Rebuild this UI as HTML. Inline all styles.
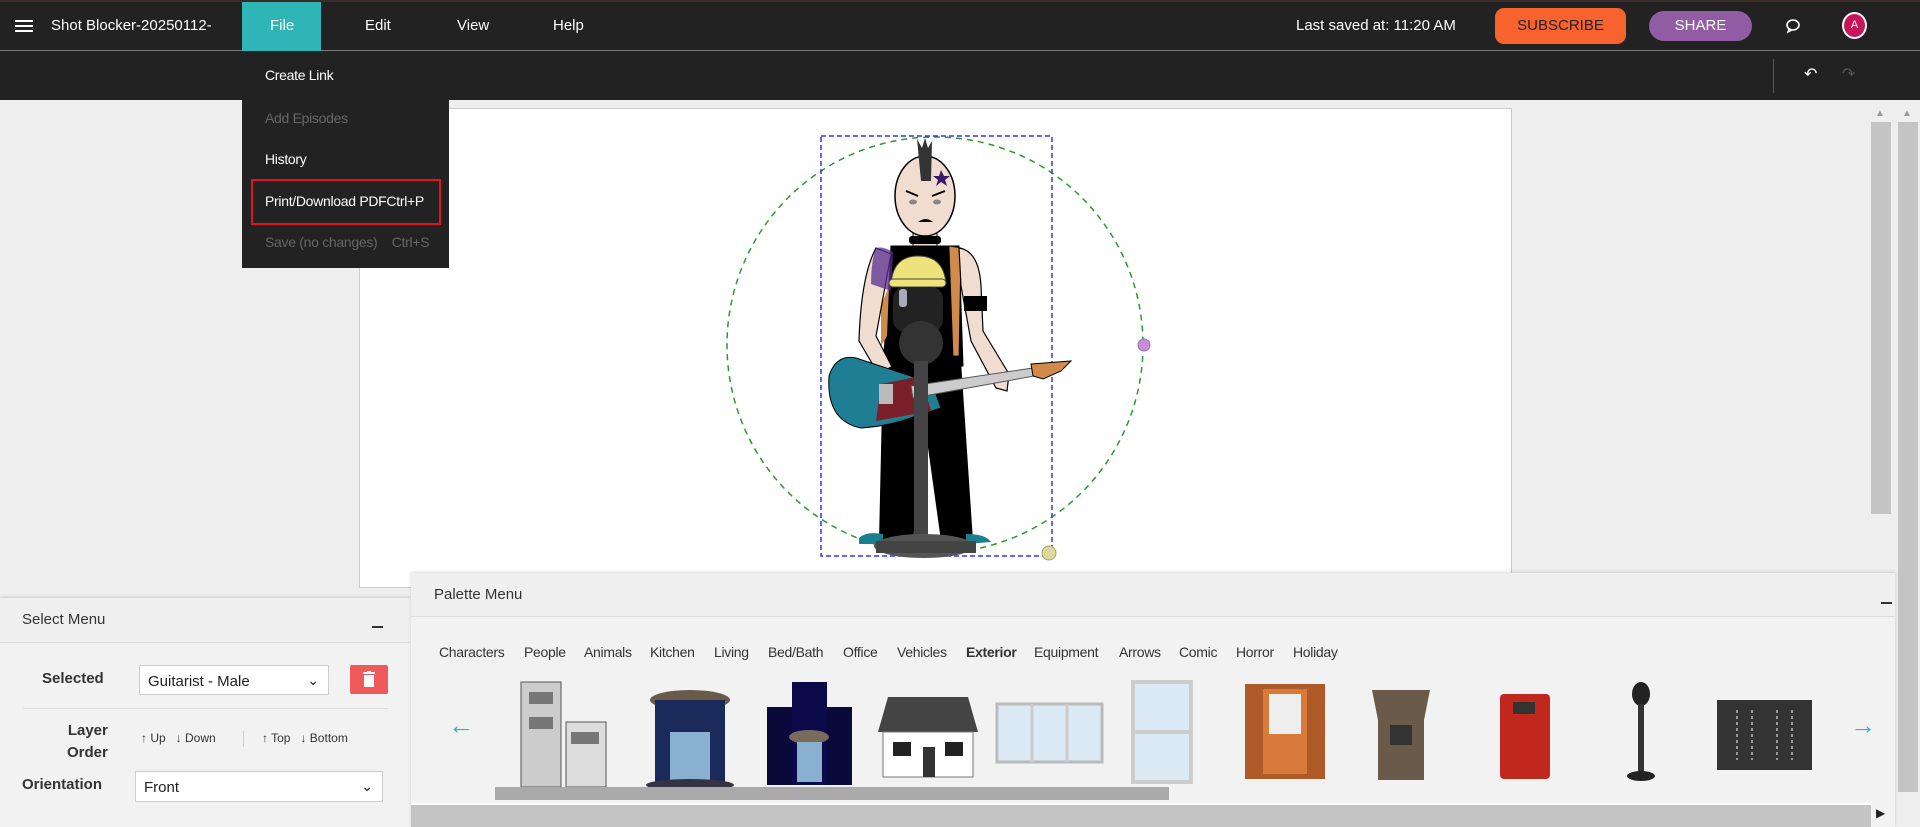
<!DOCTYPE html>
<html><head><meta charset="utf-8"><style>
*{margin:0;padding:0;box-sizing:border-box}
body{width:1920px;height:827px;overflow:hidden;background:#eee;font-family:"Liberation Sans",sans-serif;position:relative}
.a{position:absolute}
.top{left:0;top:0;width:1920px;height:51px;background:#222;border-top:2px solid #3a2a2a;border-bottom:1px solid #777}
.bar2{left:0;top:51px;width:1920px;height:49px;background:#222}
.w{color:#fff;font-size:15px;white-space:nowrap}
.menu{left:242px;top:51px;width:207px;height:217px;background:#222}
.mi{position:absolute;left:23px;font-size:14px;color:#fff;white-space:nowrap;letter-spacing:-0.3px}
.cat{position:absolute;top:644px;font-size:14px;color:#333;white-space:nowrap;letter-spacing:-0.3px}
.sel{position:absolute;background:#fff;border:1px solid #ccc;font-size:15px;color:#222;padding:7px 8px}
.chev{position:absolute;right:9px;top:6px;font-size:14px}
</style></head><body>
<div class="a top"></div>
<div class="a" style="left:15px;top:20px;width:18px;height:2px;background:#fff;box-shadow:0 5px 0 #fff,0 10px 0 #fff"></div>
<div class="a w" style="left:51px;top:17px">Shot Blocker-20250112-</div>
<div class="a" style="left:242px;top:2px;width:79px;height:49px;background:#2fb5b5"></div>
<div class="a w" style="left:270px;top:17px">File</div>
<div class="a w" style="left:365px;top:17px">Edit</div>
<div class="a w" style="left:457px;top:17px">View</div>
<div class="a w" style="left:553px;top:17px">Help</div>
<div class="a w" style="left:1296px;top:17px">Last saved at: 11:20 AM</div>
<div class="a" style="left:1495px;top:8px;width:131px;height:36px;border-radius:9px;background:#f7622e;color:#222;font-size:15px;text-align:center;line-height:36px">SUBSCRIBE</div>
<div class="a" style="left:1649px;top:11px;width:103px;height:30px;border-radius:15px;background:#915ca3;color:#fff;font-size:15px;text-align:center;line-height:30px">SHARE</div>
<svg class="a" style="left:1784px;top:18px" width="18" height="16" viewBox="0 0 18 16"><ellipse cx="9" cy="7" rx="6" ry="5" fill="none" stroke="#fff" stroke-width="1.6"/><path d="M5 11 L4 14 L8 12" fill="none" stroke="#fff" stroke-width="1.5"/></svg>
<div class="a" style="left:1842px;top:12px;width:25px;height:27px;border-radius:50%;background:#c8155a;border:2px solid #fff;color:#fff;font-size:11px;text-align:center;line-height:23px">A</div>
<div class="a bar2"></div>
<div class="a" style="left:1773px;top:59px;width:1px;height:34px;background:#555"></div>
<div class="a" style="left:1804px;top:64px;color:#fff;font-size:16px">&#8630;</div>
<div class="a" style="left:1842px;top:64px;color:#555;font-size:16px">&#8631;</div>
<div class="a" style="left:359px;top:108px;width:1153px;height:480px;background:#fff;border:1px solid #ccc"></div>
<div class="a" style="left:1871px;top:108px;width:22px;height:690px;background:#eee"></div>
<div class="a" style="left:1871px;top:122px;width:20px;height:392px;background:#c4c4c4"></div>
<div class="a" style="left:1898px;top:122px;width:20px;height:670px;background:#c4c4c4"></div>
<div class="a" style="left:1875px;top:108px;color:#999;font-size:10px">&#9650;</div>
<div class="a" style="left:1902px;top:108px;color:#999;font-size:10px">&#9650;</div>
<svg class="a" style="left:700px;top:120px" width="480" height="460" viewBox="-121 -16 480 460">
<circle cx="114" cy="209" r="208" fill="none" stroke="#2a9a2a" stroke-width="1.5" stroke-dasharray="6,5"/>
<rect x="0" y="0" width="231" height="420" fill="none" stroke="#33f" stroke-width="1.5" stroke-dasharray="5,3"/>
<circle cx="323" cy="209" r="6" fill="#c98fd6" stroke="#a070b0"/>
<circle cx="228" cy="417" r="7" fill="#dada9a" stroke="#aaa070"/>
<!-- legs -->
<path d="M62 225 L140 225 L152 405 L120 405 L104 290 L92 405 L58 405 Z" fill="#000"/>
<path d="M38 402 Q45 395 62 398 L62 408 L38 408Z M145 398 Q165 398 170 406 L145 408Z" fill="#1a7f8f"/>
<!-- torso -->
<path d="M70 110 L138 110 L142 230 L62 230 L68 150Z" fill="#000" stroke="#000"/>
<path d="M128 110 L140 112 L138 220 L132 220Z" fill="#d08a4a" stroke="#000" stroke-width=".8"/>
<path d="M60 170 L68 150 L66 200 L60 210Z" fill="#d08a4a"/>
<!-- left arm (viewer) -->
<path d="M55 112 Q40 140 38 205 L70 260 L82 252 L55 200 L70 118Z" fill="#f0ddd0" stroke="#000" stroke-width="1.2"/>
<path d="M55 112 Q62 110 72 116 L70 155 L50 148 Q50 125 55 112Z" fill="#5a2d91" opacity=".75"/>
<rect x="60" y="232" width="18" height="14" fill="#000" transform="rotate(-30 69 239)"/>
<!-- right arm -->
<path d="M138 112 Q158 115 160 150 L162 195 L188 238 L186 255 L175 252 L150 205 L140 150Z" fill="#f0ddd0" stroke="#000" stroke-width="1.2"/>
<rect x="143" y="160" width="23" height="15" fill="#000"/>
<!-- neck and head -->
<rect x="92" y="85" width="24" height="25" fill="#f0ddd0" stroke="#000"/>
<rect x="88" y="100" width="32" height="8" rx="3" fill="#000"/>
<ellipse cx="104" cy="60" rx="30" ry="40" fill="#f0ddd0" stroke="#000" stroke-width="1.5"/>
<path d="M96 3 L101 12 L104 2 L107 12 L111 5 L110 45 L100 45Z" fill="#333"/>
<path d="M120 34 l3 6 6 0 -5 4 2 6 -6 -4 -5 4 2 -6 -5 -4 6 0Z" fill="#3a1a6a"/>
<path d="M85 55 L97 60 M111 60 L124 55" stroke="#000" stroke-width="2"/>
<ellipse cx="92" cy="66" rx="4" ry="2.5" fill="#888"/><ellipse cx="116" cy="66" rx="4" ry="2.5" fill="#888"/>
<path d="M97 86 Q105 80 112 86Z" fill="#000"/>
<!-- guitar -->
<path d="M35 222 Q15 218 8 240 Q5 285 40 292 Q70 290 95 280 L120 272 L112 250 L90 240 Q65 232 35 222Z" fill="#1f7e94" stroke="#000"/>
<path d="M60 248 L100 240 L110 275 L55 285Z" fill="#7a1f28"/>
<rect x="58" y="248" width="14" height="20" fill="#bbb"/>
<path d="M90 250 L212 232 L213 240 L92 262Z" fill="#ccc" stroke="#555"/>
<path d="M210 228 L250 225 L240 235 L222 243 L212 240Z" fill="#d08a4a" stroke="#000"/>
<!-- parking meter -->
<path d="M70 148 Q72 120 97 120 Q123 120 125 148Z" fill="#eee37a" stroke="#444"/>
<rect x="68" y="143" width="57" height="8" rx="4" fill="#eee37a" stroke="#444"/>
<rect x="72" y="151" width="50" height="45" rx="12" fill="#222"/>
<rect x="78" y="153" width="8" height="18" rx="3" fill="#aab"/>
<ellipse cx="100" cy="207" rx="22" ry="22" fill="#333"/>
<rect x="93" y="225" width="14" height="175" fill="#444"/>
<ellipse cx="103" cy="410" rx="50" ry="12" fill="#555"/>
<rect x="55" y="405" width="100" height="12" fill="#444"/>
</svg>
<div class="a menu">
<div class="mi" style="top:16px">Create Link</div>
<div class="mi" style="top:59px;color:#666">Add Episodes</div>
<div class="mi" style="top:100px">History</div>
<div class="mi" style="top:142px">Print/Download PDFCtrl+P</div>
<div class="mi" style="top:183px;color:#666">Save (no changes)&nbsp;&nbsp;&nbsp;&nbsp;Ctrl+S</div>
</div>
<div class="a" style="left:251px;top:179px;width:190px;height:46px;border:2px solid #e0141e"></div>
<div class="a" style="left:0;top:598px;width:411px;height:229px;background:#f2f2f2;border-top:1px solid #ddd;box-shadow:0 -1px 3px rgba(0,0,0,.15)"></div>
<div class="a" style="left:0;top:598px;width:411px;height:45px;background:#efefef;border-bottom:1px solid #ddd"></div>
<div class="a" style="left:22px;top:611px;font-size:15px;color:#333">Select Menu</div>
<div class="a" style="left:372px;top:626px;width:11px;height:2px;background:#333"></div>
<div class="a" style="left:42px;top:670px;font-size:15px;font-weight:bold;color:#333">Selected</div>
<div class="sel" style="left:139px;top:665px;width:190px;height:30px">Guitarist - Male<span class="chev">&#8964;</span></div>
<div class="a" style="left:350px;top:665px;width:38px;height:29px;background:#ee5a5a;border-radius:2px"></div>
<svg class="a" style="left:363px;top:671px" width="12" height="16"><rect x="0" y="1" width="12" height="2" fill="#fff"/><rect x="4" y="0" width="4" height="2" fill="#fff"/><rect x="1" y="4" width="10" height="12" fill="#fff"/></svg>
<div class="a" style="left:23px;top:708px;width:365px;height:1px;background:#ddd"></div>
<div class="a" style="left:67px;top:720px;font-size:15px;font-weight:bold;color:#333;text-align:right;line-height:22px">Layer<br>Order</div>
<div class="a" style="left:141px;top:731px;font-size:12px;color:#333">&#8593; Up &nbsp;&nbsp;&#8595; Down</div>
<div class="a" style="left:243px;top:731px;width:1px;height:16px;background:#ccc"></div>
<div class="a" style="left:262px;top:731px;font-size:12px;color:#333">&#8593; Top &nbsp;&nbsp;&#8595; Bottom</div>
<div class="a" style="left:22px;top:776px;font-size:15px;font-weight:bold;color:#333">Orientation</div>
<div class="sel" style="left:135px;top:771px;width:248px;height:31px">Front<span class="chev">&#8964;</span></div>
<div class="a" style="left:411px;top:573px;width:1484px;height:254px;background:#f2f2f2;border-top:1px solid #ddd;box-shadow:0 -1px 3px rgba(0,0,0,.15)"></div>
<div class="a" style="left:411px;top:573px;width:1484px;height:44px;background:#efefef;border-bottom:1px solid #ddd"></div>
<div class="a" style="left:434px;top:586px;font-size:15px;color:#333">Palette Menu</div>
<div class="a" style="left:1881px;top:602px;width:11px;height:2px;background:#333"></div>
<div class="cat" style="left:439px">Characters</div><div class="cat" style="left:524px">People</div><div class="cat" style="left:584px">Animals</div><div class="cat" style="left:650px">Kitchen</div><div class="cat" style="left:714px">Living</div><div class="cat" style="left:768px">Bed/Bath</div><div class="cat" style="left:843px">Office</div><div class="cat" style="left:897px">Vehicles</div><div class="cat" style="left:966px;font-weight:bold">Exterior</div><div class="cat" style="left:1034px">Equipment</div><div class="cat" style="left:1119px">Arrows</div><div class="cat" style="left:1179px">Comic</div><div class="cat" style="left:1236px">Horror</div><div class="cat" style="left:1293px">Holiday</div>
<div class="a" style="left:448px;top:710px;color:#2fb5b5;font-size:26px">&#8592;</div>
<div class="a" style="left:1850px;top:710px;color:#2fb5b5;font-size:26px">&#8594;</div>
<svg class="a" style="left:495px;top:672px" width="1340" height="115">
<g transform="translate(26,10)"><rect x="0" y="0" width="40" height="105" fill="#ccc" stroke="#555"/><rect x="45" y="40" width="40" height="65" fill="#ddd" stroke="#555"/><rect x="8" y="10" width="24" height="12" fill="#777"/><rect x="8" y="35" width="24" height="12" fill="#777"/><rect x="50" y="50" width="28" height="12" fill="#777"/></g>
<g transform="translate(155,20)"><ellipse cx="40" cy="8" rx="40" ry="10" fill="#6a5a4a"/><rect x="5" y="8" width="70" height="85" fill="#1a2a5a"/><rect x="20" y="40" width="40" height="50" fill="#8ab0d0"/><ellipse cx="40" cy="93" rx="44" ry="6" fill="#334"/></g>
<g transform="translate(272,10)"><rect x="0" y="25" width="85" height="78" fill="#0a0a3a"/><rect x="25" y="0" width="35" height="103" fill="#0a0a4a"/><ellipse cx="42" cy="55" rx="20" ry="7" fill="#7a6a5a"/><rect x="30" y="60" width="25" height="40" fill="#8ab0d0"/></g>
<g transform="translate(383,25)"><path d="M0 35 L10 0 L90 0 L100 35Z" fill="#444"/><rect x="5" y="35" width="90" height="45" fill="#fff" stroke="#777"/><rect x="45" y="50" width="12" height="30" fill="#333"/><rect x="15" y="45" width="18" height="14" fill="#222"/><rect x="67" y="45" width="18" height="14" fill="#222"/></g>
<g transform="translate(502,32)"><rect x="0" y="0" width="105" height="58" fill="#dbeaf5" stroke="#bbb" stroke-width="3"/><path d="M35 0V58M70 0V58" stroke="#ccc" stroke-width="3"/></g>
<g transform="translate(638,10)"><rect x="0" y="0" width="58" height="100" fill="#dbeaf5" stroke="#ccc" stroke-width="4"/><path d="M0 50H58" stroke="#ccc" stroke-width="4"/></g>
<g transform="translate(750,12)"><rect x="0" y="0" width="80" height="95" fill="#b05a2a"/><rect x="18" y="5" width="44" height="85" fill="#d87a3a"/><rect x="24" y="10" width="32" height="40" fill="#eee"/></g>
<g transform="translate(877,18)"><path d="M0 0 H58 L52 30 V90 H6 V30Z" fill="#6a5a4a"/><rect x="18" y="35" width="22" height="20" fill="#333"/></g>
<g transform="translate(1005,12)"><rect x="0" y="10" width="50" height="85" rx="4" fill="#c0281e"/><rect x="13" y="18" width="22" height="12" fill="#333"/></g>
<g transform="translate(1130,12)"><ellipse cx="16" cy="10" rx="9" ry="12" fill="#222"/><rect x="13" y="20" width="6" height="68" fill="#333"/><ellipse cx="16" cy="92" rx="14" ry="5" fill="#222"/></g>
<g transform="translate(1222,28)"><rect x="0" y="0" width="95" height="70" fill="#333"/><path d="M20 10V60M35 10V60M60 10V60M75 10V60" stroke="#999" stroke-width="2" stroke-dasharray="3,3"/></g>
</svg>
<div class="a" style="left:495px;top:787px;width:674px;height:13px;background:#aaa"></div>
<div class="a" style="left:411px;top:803px;width:1460px;height:24px;background:#c4c4c4;border-top:2px solid #fff"></div>
<div class="a" style="left:1876px;top:806px;color:#222;font-size:12px">&#9654;</div>
</body></html>
